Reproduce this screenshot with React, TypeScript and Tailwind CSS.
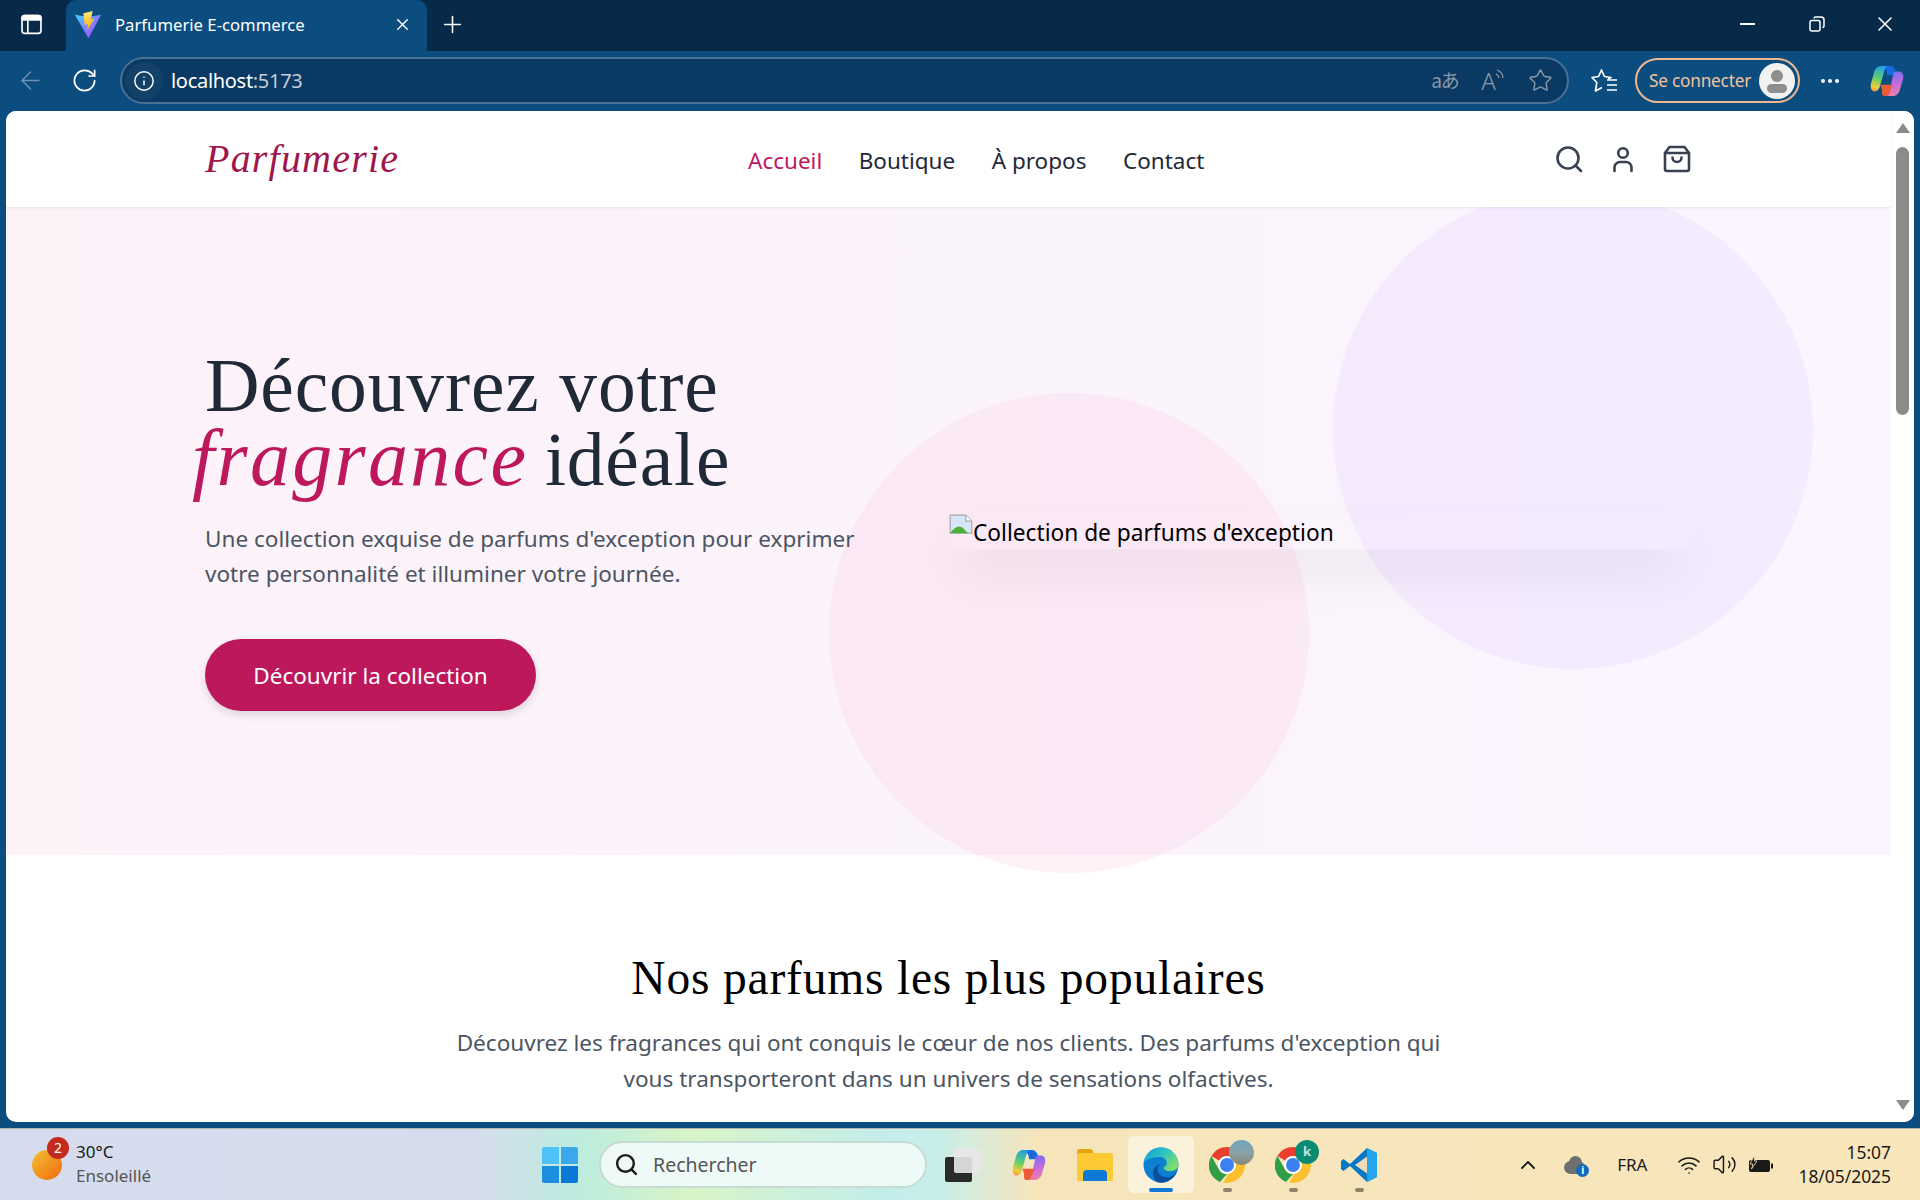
import { ArrowLeft, ChevronUp, Info, MoreHorizontal, Plus, RotateCw, Search, Star, Volume2, Wifi, X } from 'lucide-react';

const uiFont = "font-['Noto_Sans',sans-serif]";
const serif = "font-['Liberation_Serif',serif]";

function ViteLogo() {
  return (
    <svg viewBox="0 0 32 32" className="h-[30px] w-[30px]">
      <defs>
        <linearGradient id="vite-a" x1="0" y1="0" x2="1" y2="1">
          <stop offset="0" stopColor="#41d1ff" />
          <stop offset="1" stopColor="#bd34fe" />
        </linearGradient>
        <linearGradient id="vite-b" x1="0" y1="0" x2="0" y2="1">
          <stop offset="0" stopColor="#ffea83" />
          <stop offset="1" stopColor="#ffa800" />
        </linearGradient>
      </defs>
      <path d="M2 5 L16 7.5 L30 5 L16.5 30 Z" fill="url(#vite-a)" />
      <path d="M21 1 L11 3.5 L12.5 16 L16 15 L15 22 L23 9 L19 10 Z" fill="url(#vite-b)" />
    </svg>
  );
}

function CopilotLogo({ id }: { id: string }) {
  return (
    <svg viewBox="0 0 36 36" className="h-[34px] w-[34px]">
      <defs>
        <linearGradient id={`${id}-a`} x1="0.5" y1="0" x2="0.3" y2="1">
          <stop offset="0" stopColor="#1f9fe8" />
          <stop offset="0.5" stopColor="#63cf6a" />
          <stop offset="0.85" stopColor="#f3cc3a" />
          <stop offset="1" stopColor="#f39a3a" />
        </linearGradient>
        <linearGradient id={`${id}-b`} x1="0.5" y1="0" x2="0.6" y2="1">
          <stop offset="0" stopColor="#7a6cf0" />
          <stop offset="0.5" stopColor="#c56be0" />
          <stop offset="1" stopColor="#f27fa8" />
        </linearGradient>
      </defs>
      <path d="M11 2 H21 C24 2 26 4 27 7 L29 12 L18 12 C18 8 17 5 14 5 C12 5 11 3 11 2 Z" fill="#1668e0" />
      <path d="M12 2 H20 C17 2 16 4 15 8 L11 22 C10 26 8 29 5 29 C2 29 0 26 1 21 L4 10 C5 5 8 2 12 2 Z" fill={`url(#${id}-a)`} />
      <path d="M25 9 C27 8 29 8 31 8 C34 8 36 11 35 16 L32 26 C31 31 28 34 24 34 H16 C19 34 20 32 21 28 L25 9 Z" fill={`url(#${id}-b)`} />
      <path d="M11 22 H24 L21 29 C20 33 18 34 16 34 C13 34 12 31 13 28 Z" fill="#ef5b35" />
    </svg>
  );
}

function EdgeLogo() {
  return (
    <svg viewBox="0 0 36 36" className="h-9 w-9">
      <defs>
        <linearGradient id="edge-a" x1="0" y1="0" x2="1" y2="0.6">
          <stop offset="0" stopColor="#0e9fd8" />
          <stop offset="0.55" stopColor="#2fc4c0" />
          <stop offset="1" stopColor="#7fdc6a" />
        </linearGradient>
      </defs>
      <circle cx="18" cy="18" r="17.500" fill="#0c7fd1" />
      <path d="M1 15 C3 5 10 .5 18 .5 C28 .5 35.500 8 35.500 18 C35.500 22 31 24 27 24 C22 24 20 22 21 20 C26 18 24 10 17 10 C10 10 5 12 1 15 Z" fill="url(#edge-a)" />
      <path d="M14 35 C8 30 9 19 17 17 C13 21 14 29 22 30 C26 31 31 29 34 25 C31 32 22 38 14 35 Z" fill="#0b4f9c" />
    </svg>
  );
}

function ChromeLogo({ overlay }: { overlay: 'photo' | 'k' }) {
  return (
    <div className="relative h-9 w-9">
      <svg viewBox="0 0 36 36" className="h-9 w-9">
        <path d="M18 0 A18 18 0 0 1 33.600 9 L18 9 A9 9 0 0 0 10 13.500 L2.400 9 A18 18 0 0 1 18 0 Z" fill="#e8402f" />
        <path d="M2.400 9 L10 22.500 A9 9 0 0 0 18 27 L11 35 A18 18 0 0 1 2.400 9 Z" fill="#2f9e44" />
        <path d="M33.600 9 A18 18 0 0 1 14 35.500 L22 22.500 A9 9 0 0 0 18 9 Z" fill="#fbc02d" />
        <circle cx="18" cy="18" r="9" fill="#fff" />
        <circle cx="18" cy="18" r="7" fill="#3b82f0" />
      </svg>
      {overlay === 'photo' ? (
        <div className="absolute -right-[9px] -top-[7px] h-[25px] w-[25px] rounded-full bg-[linear-gradient(180deg,#6ba6bd_0%,#8aa3a8_50%,#8c8677_100%)]" />
      ) : (
        <div className="absolute -right-[8px] -top-[7px] flex h-[24px] w-[24px] items-center justify-center rounded-full bg-[#0d8a74] text-[13px] font-bold text-[#bfe6df]">
          k
        </div>
      )}
    </div>
  );
}

function VsCodeLogo() {
  return (
    <svg viewBox="0 0 36 36" className="h-9 w-9">
      <path d="M26 1 L36 6 L36 30 L26 35 L9 19 L2.500 24 L0 22 L0 14 L2.500 12 L9 17 Z" fill="#0a78c6" />
      <path d="M26 9.500 L14 18 L26 26.500 Z" fill="#eddcb6" />
      <path d="M26 1 L36 6 L36 30 L26 35 Z" fill="#23a6ee" />
    </svg>
  );
}

function TabStrip() {
  return (
    <div className="flex h-[51px] shrink-0 items-end bg-[#072a49] text-white">
      <div className="flex h-[51px] w-[66px] items-center justify-center pr-[4px] pb-[2px]">
        <svg viewBox="0 0 20 20" className="h-[21px] w-[21px]" fill="none" stroke="#fff" strokeWidth="1.600">
          <rect x="1" y="1.500" width="18" height="17" rx="2.500" />
          <path d="M1 5.500h18M6.500 5.500v13" />
          <path d="M1 4 a2.500 2.500 0 0 1 2.500-2.500h13A2.500 2.500 0 0 1 19 4v1.500H1Z" fill="#fff" />
        </svg>
      </div>
      <div className="flex h-[51px] w-[361px] items-center rounded-t-[10px] bg-[#0c4d80] pb-[2px] pl-[7px]">
        <ViteLogo />
        <span className={`${uiFont} ml-[12px] text-[16.700px]`}>Parfumerie E-commerce</span>
        <X className="ml-auto mr-[15px] h-[19px] w-[19px]" strokeWidth={1.700} />
      </div>
      <div className="flex h-[51px] w-[50px] items-center justify-center pb-[2px]">
        <Plus className="h-[27px] w-[27px]" strokeWidth={1.400} />
      </div>
      <div className="ml-auto flex h-[51px] items-center pr-[2px] pb-[3px]">
        <div className="flex w-[70px] justify-center">
          <div className="h-[2px] w-[15px] bg-white" />
        </div>
        <div className="flex w-[70px] justify-center">
          <svg viewBox="0 0 16 16" className="h-[16px] w-[16px]" fill="none" stroke="#fff" strokeWidth="1.500">
            <rect x="1" y="4.500" width="10" height="10.500" rx="2" />
            <path d="M5 2.500 a1.500 1.500 0 0 1 1.500-1.500H12a3 3 0 0 1 3 3v6a1.500 1.500 0 0 1-1.500 1.500" />
          </svg>
        </div>
        <div className="flex w-[66px] justify-center">
          <X className="h-[24px] w-[24px]" strokeWidth={1.500} />
        </div>
      </div>
    </div>
  );
}

function Toolbar() {
  return (
    <div className="flex h-[60px] shrink-0 items-center bg-[#0c4d80] pb-[1px] text-white">
      <div className="flex w-[60px] justify-center">
        <ArrowLeft className="h-[29px] w-[29px] text-[#6f93b3]" strokeWidth={1.200} />
      </div>
      <div className="flex w-[48px] justify-center">
        <RotateCw className="h-[27px] w-[27px]" strokeWidth={1.500} />
      </div>
      <div className="ml-[12px] flex h-[47px] w-[1449px] items-center rounded-full border-2 border-[#4a7092] bg-[#0a3a63] pl-[3px]">
        <div className="flex h-[38px] w-[38px] items-center justify-center rounded-full bg-[#124268]">
          <Info className="h-[22px] w-[22px]" strokeWidth={1.600} />
        </div>
        <span className={`${uiFont} ml-[8px] text-[20px] tracking-[-0.300px]`}>
          localhost<span className="text-[#c3ccd4]">:5173</span>
        </span>
        <div className="ml-auto flex items-center pr-[2px] text-[#8b98a6]">
          <span className="flex w-[48px] justify-center font-['Noto_Sans_CJK_JP',sans-serif] text-[19px] tracking-[-1px]">aあ</span>
          <span className={`${uiFont} relative flex w-[48px] items-center justify-center text-[24px] font-light leading-none`}>
            A
            <svg viewBox="0 0 10 14" className="-ml-[1px] -mt-[10px] h-[14px] w-[10px]" fill="none" stroke="currentColor" strokeWidth="1.200">
              <path d="M1 5 a5 5 0 0 1 3 4M2 1 a9 9 0 0 1 6 8" />
            </svg>
          </span>
          <div className="flex w-[48px] justify-center pr-[2px]">
            <Star className="h-[25px] w-[25px]" strokeWidth={1.400} />
          </div>
        </div>
      </div>
      <div className="ml-[14px] flex w-[44px] justify-center">
        <svg viewBox="0 0 28 26" className="h-[26px] w-[28px]" fill="none" stroke="#fff" strokeWidth="1.700" strokeLinejoin="round">
          <path d="M17 11 L20 9.500 L13.500 8.500 L10.500 2 L7.500 8.500 L1 9.500 L5.800 14.500 L4.500 23 L11 19.500" />
          <path d="M16 12h10M16 17h10M16 22h10" />
        </svg>
      </div>
      <div className="ml-[8px] flex h-[45px] w-[165px] items-center rounded-full border-2 border-[#eeb78f] pl-[12px] pr-[3px]">
        <span className={`${uiFont} text-[17.200px] tracking-[-0.200px] text-[#f3c29c]`}>Se connecter</span>
        <div className="relative ml-auto h-[36px] w-[36px] overflow-hidden rounded-full bg-[#f2f2f2]">
          <div className="absolute left-[12px] top-[7px] h-[12px] w-[12px] rounded-full bg-[#8e8e8e]" />
          <div className="absolute left-[8px] top-[21px] h-[9px] w-[20px] rounded-full bg-[#8e8e8e]" />
        </div>
      </div>
      <div className="ml-[12px] flex w-[36px] justify-center">
        <MoreHorizontal className="h-[24px] w-[24px]" strokeWidth={2} />
      </div>
      <div className="ml-[22px] flex w-[34px] justify-center">
        <CopilotLogo id="cop-top" />
      </div>
    </div>
  );
}

function NavIcons() {
  return (
    <div className="ml-auto flex gap-[24px] text-[#374151]">
      <svg viewBox="0 0 30 30" className="h-[30px] w-[30px]" fill="none" stroke="currentColor" strokeWidth="2.600" strokeLinecap="round">
        <circle cx="14" cy="14" r="10.500" />
        <path d="M22.500 22.500 L27 27" />
      </svg>
      <svg viewBox="0 0 30 30" className="h-[30px] w-[30px]" fill="none" stroke="currentColor" strokeWidth="2.600" strokeLinecap="round">
        <circle cx="15" cy="9" r="4.800" />
        <path d="M6.500 27 v-3.500 a5.500 5.500 0 0 1 5.500-5.500 h6 a5.500 5.500 0 0 1 5.500 5.500 v3.500" />
      </svg>
      <svg viewBox="0 0 30 30" className="h-[30px] w-[30px]" fill="none" stroke="currentColor" strokeWidth="2.600" strokeLinejoin="round" strokeLinecap="round">
        <path d="M7.500 3 H22.500 L27 9 V25 a2 2 0 0 1-2 2 H5 a2 2 0 0 1-2-2 V9 Z" />
        <path d="M3 9 H27" />
        <path d="M10.500 13.500 a4.500 4.500 0 0 0 9 0" />
      </svg>
    </div>
  );
}

function SiteNav() {
  return (
    <nav className="relative z-20 flex h-[96px] shrink-0 items-center bg-white shadow-[0_1px_3px_rgba(0,0,0,0.08)]">
      <div className="mx-auto flex w-[1487px] items-center">
        <a className={`${serif} w-[543px] text-[40px] italic tracking-[1.200px] text-[#9d174d]`}>Parfumerie</a>
        <div className={`${uiFont} flex gap-[36.500px] pt-[3px] text-[22.500px] text-[#1f2937]`}>
          <a className="text-[#be185d]">Accueil</a>
          <a>Boutique</a>
          <a>À propos</a>
          <a>Contact</a>
        </div>
        <NavIcons />
      </div>
    </nav>
  );
}

function Hero() {
  return (
    <section className="relative flex h-[648px] shrink-0 items-center bg-[linear-gradient(90deg,#fdf2f8,#faf5ff)]">
      <div className="absolute left-[1327px] top-[-18px] h-[480px] w-[480px] rounded-full bg-[#e9d5ff]/30" />
      <div className="absolute left-[823px] top-[186px] h-[480px] w-[480px] rounded-full bg-[#fbcfe8]/30" />
      <div className="relative mx-auto grid w-[1487px] grid-cols-[664px_743px] items-center gap-[80px]">
        <div className="pb-[3px]">
          <h1 className={`${serif} text-[75.500px] leading-[73px] tracking-[0.850px] text-[#1f2937]`}>
            Découvrez votre
            <br />
            <em className="-ml-[13px] -mr-[3px] text-[80px] tracking-[2.300px] text-[#be185d]">fragrance</em> idéale
          </h1>
          <p className={`${uiFont} mt-[25px] text-[22.550px] leading-[35px] text-[#4b5563]`}>
            Une collection exquise de parfums d'exception pour exprimer votre personnalité et illuminer votre journée.
          </p>
          <button className={`${uiFont} mt-[48px] h-[72px] w-[331px] rounded-full bg-[#be185d] pt-[2px] text-[22.500px] text-white shadow-[0_4px_8px_rgba(0,0,0,0.12)]`}>
            Découvrir la collection
          </button>
        </div>
        <div className={`${uiFont} h-[35px] rounded-[10px] text-[22.700px] leading-[35px] text-black shadow-[0_25px_50px_-12px_rgba(0,0,0,0.18)]`}>
          <svg viewBox="0 0 20 20" className="inline-block h-6 w-6 align-[3px]">
            <path d="M1 1h13l5 5v10H1Z" fill="#d7e6f8" stroke="#a8a8a8" />
            <path d="M1 16 C5 10 9 9 12 12 L16 16Z" fill="#4caf3c" />
            <path d="M14 1v5h5" fill="#fff" stroke="#a8a8a8" />
          </svg>
          Collection de parfums d'exception
        </div>
      </div>
    </section>
  );
}

function Popular() {
  return (
    <section className="flex flex-col items-center pt-[93px] text-center">
      <h2 className={`${serif} text-[47.500px] leading-[60px] tracking-[0.800px] text-black`}>Nos parfums les plus populaires</h2>
      <p className={`${uiFont} mt-[17px] w-[1020px] text-[22.550px] leading-[36px] text-[#4b5563]`}>
        Découvrez les fragrances qui ont conquis le cœur de nos clients. Des parfums d'exception qui vous transporteront dans un univers de sensations olfactives.
      </p>
    </section>
  );
}

function Scrollbar() {
  return (
    <div className="flex w-[23px] shrink-0 flex-col items-center bg-white pt-[12px]">
      <div className="h-0 w-0 border-x-[7px] border-b-[10px] border-x-transparent border-b-[#8b8b8b]" />
      <div className="mt-[14px] h-[268px] w-[13px] rounded-full bg-[#8b8b8b]" />
      <div className="mt-auto mb-[12px] h-0 w-0 border-x-[7px] border-t-[10px] border-x-transparent border-t-[#8b8b8b]" />
    </div>
  );
}

function TaskbarApp({ active, running, children }: { active?: boolean; running?: boolean; children: React.ReactNode }) {
  return (
    <div className={`relative flex h-[57px] w-[66px] items-center justify-center rounded-[6px] ${active ? 'bg-[#fbf2dc]' : ''}`}>
      {children}
      {active && <div className="absolute bottom-[1px] h-[4px] w-[24px] rounded-full bg-[#0f78d4]" />}
      {running && <div className="absolute bottom-[1px] h-[4px] w-[9px] rounded-full bg-[#8f8468]" />}
    </div>
  );
}

function Taskbar() {
  return (
    <div className={`${uiFont} flex h-[72px] shrink-0 items-center border-t border-[#b5b3ae] bg-[linear-gradient(90deg,#d6dcee_0%,#d5ddec_25%,#bcecdf_30%,#d8f4c6_36%,#c3edec_46%,#c9eee8_49%,#f6e5bb_54%,#f9e6bb_100%)]`}>
      <div className="relative ml-[32px] h-[30px] w-[30px] rounded-full bg-[linear-gradient(135deg,#f4c030,#f06a10)]">
        <div className="absolute -right-[7px] -top-[13px] flex h-[22px] w-[22px] items-center justify-center rounded-full bg-[#c42b1c] text-[14px] text-white">
          2
        </div>
      </div>
      <div className="ml-[14px] w-[76px] pb-[1px] text-[17px] leading-[24px]">
        <div className="text-[#1a1a1a]">30°C</div>
        <div className="text-[#555]">Ensoleillé</div>
      </div>
      <div className="ml-[390px] grid h-[36px] w-[36px] grid-cols-2 gap-[2px]">
        <div className="rounded-tl-[2px] bg-[#4fc3f7]" />
        <div className="rounded-tr-[2px] bg-[#3aa9ec]" />
        <div className="rounded-bl-[2px] bg-[#1c8fe0]" />
        <div className="rounded-br-[2px] bg-[#0a78d4]" />
      </div>
      <div className="ml-[21px] flex h-[47px] w-[328px] items-center rounded-full border-2 border-[#c6dcd2] bg-[#eefaf7] pl-[13px]">
        <Search className="h-[25px] w-[25px] text-[#1a1a1a]" strokeWidth={2.300} />
        <span className="ml-[14px] text-[19.500px] text-[#555]">Rechercher</span>
      </div>
      <div className="ml-[3px] flex items-center">
        <TaskbarApp>
          <div className="relative h-[34px] w-[36px]">
            <div className="absolute bottom-0 left-0 h-[25px] w-[27px] rounded-[2px] bg-[#2a2a2a]" />
            <div className="absolute right-0 top-0 h-[25px] w-[27px] rounded-[2px] bg-[#e8e8e8]/90" />
          </div>
        </TaskbarApp>
        <TaskbarApp>
          <CopilotLogo id="cop-bar" />
        </TaskbarApp>
        <TaskbarApp>
          <div className="relative h-[32px] w-[36px]">
            <div className="absolute left-0 top-0 h-[12px] w-[16px] rounded-t-[3px] bg-[#e5a50a]" />
            <div className="absolute bottom-0 left-0 h-[28px] w-[36px] rounded-[2px] bg-[#fdc935]" />
            <div className="absolute bottom-0 left-[6px] h-[11px] w-[24px] rounded-t-[4px] bg-[#0f78d4]" />
          </div>
        </TaskbarApp>
        <TaskbarApp active>
          <EdgeLogo />
        </TaskbarApp>
        <TaskbarApp running>
          <ChromeLogo overlay="photo" />
        </TaskbarApp>
        <TaskbarApp running>
          <ChromeLogo overlay="k" />
        </TaskbarApp>
        <TaskbarApp running>
          <VsCodeLogo />
        </TaskbarApp>
      </div>
      <div className="ml-auto flex items-center pr-[29px] text-[#1a1a1a]">
        <ChevronUp className="h-[24px] w-[24px]" strokeWidth={1.800} />
        <div className="relative ml-[24px] h-[18px] w-[24px]">
          <div className="absolute bottom-0 left-0 h-[13px] w-[21px] rounded-full bg-[#6f6f6f]" />
          <div className="absolute left-[5px] top-0 h-[13px] w-[13px] rounded-full bg-[#6f6f6f]" />
          <div className="absolute -bottom-[3px] -right-[1px] flex h-[13px] w-[13px] items-center justify-center rounded-full bg-[#0f6cbd] text-[10px] font-bold leading-none text-white">
            i
          </div>
        </div>
        <span className="ml-[29px] text-[17px]">FRA</span>
        <Wifi className="ml-[30px] h-[24px] w-[24px]" strokeWidth={1.600} />
        <Volume2 className="ml-[11px] h-[25px] w-[25px]" strokeWidth={1.400} />
        <svg viewBox="0 0 26 18" className="ml-[11px] h-[18px] w-[26px]">
          <rect x="1" y="4" width="21" height="12" rx="2" fill="#1a1a1a" />
          <rect x="23" y="7.500" width="2" height="5" fill="#1a1a1a" />
          <path d="M6 0 L2 8 H5 L3.500 13 L9 5 H6.500 Z" fill="#1a1a1a" stroke="#f9e6bb" strokeWidth="0.800" />
        </svg>
        <div className="ml-[24px] pb-[1px] text-right text-[17.400px] leading-[24px]">
          <div>15:07</div>
          <div>18/05/2025</div>
        </div>
      </div>
    </div>
  );
}

export default function App() {
  return (
    <div className="flex h-[1200px] w-[1920px] flex-col overflow-hidden bg-[#0c4d80]">
      <TabStrip />
      <Toolbar />
      <div className="mx-[6px] flex h-[1011px] shrink-0 overflow-hidden rounded-[10px] bg-white">
        <main className="flex min-w-0 flex-1 flex-col">
          <SiteNav />
          <Hero />
          <Popular />
        </main>
        <Scrollbar />
      </div>
      <div className="h-[6px] shrink-0" />
      <Taskbar />
    </div>
  );
}
